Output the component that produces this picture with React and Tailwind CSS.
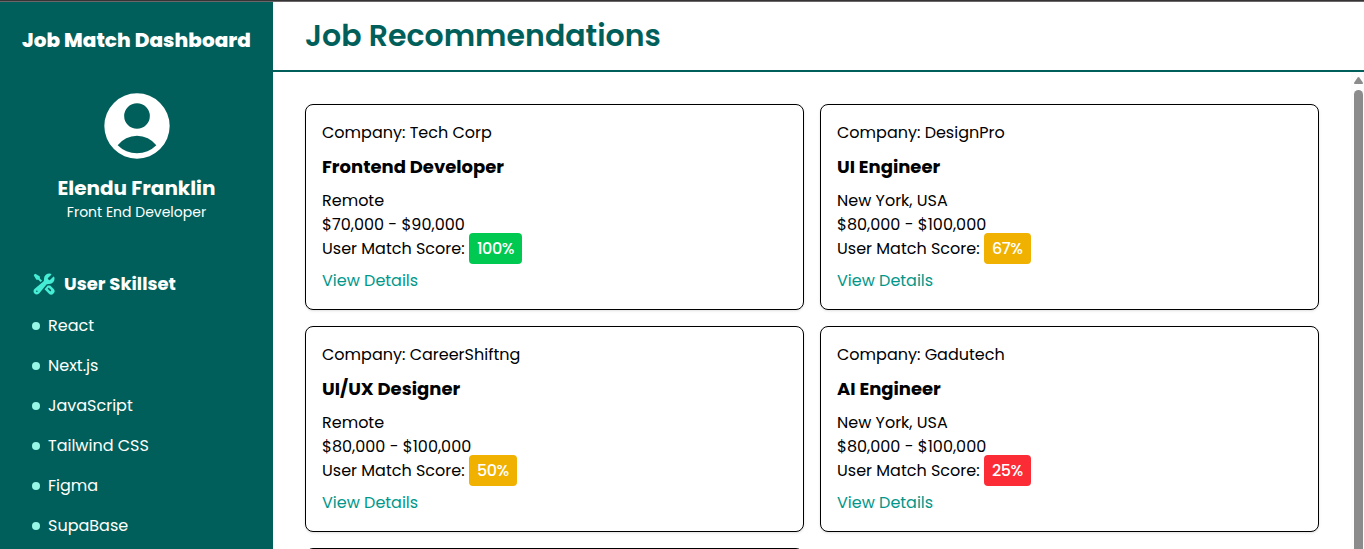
import React from 'react';
import { HiWrenchScrewdriver } from 'react-icons/hi2';

const skills = ['React', 'Next.js', 'JavaScript', 'Tailwind CSS', 'Figma', 'SupaBase'];

const jobs = [
  { company: 'Tech Corp', title: 'Frontend Developer', place: 'Remote', pay: '$70,000 - $90,000', score: '100%', tone: 'bg-green-500' },
  { company: 'DesignPro', title: 'UI Engineer', place: 'New York, USA', pay: '$80,000 - $100,000', score: '67%', tone: 'bg-yellow-500' },
  { company: 'CareerShiftng', title: 'UI/UX Designer', place: 'Remote', pay: '$80,000 - $100,000', score: '50%', tone: 'bg-yellow-500' },
  { company: 'Gadutech', title: 'AI Engineer', place: 'New York, USA', pay: '$80,000 - $100,000', score: '25%', tone: 'bg-red-500' },
];

function Avatar() {
  return (
    <svg viewBox="-1 -1 198 198" className="ml-px size-[66px]" aria-hidden="true">
      <path
        fill="currentColor"
        fillRule="evenodd"
        d="M98 0a98 98 0 1 0 0 196A98 98 0 0 0 98 0zM98 29.500a38.500 38.500 0 1 1 0 77a38.500 38.500 0 0 1 0-77zM40 156A72.500 72.500 0 0 1 156 156A82 82 0 0 1 40 156z"
      />
    </svg>
  );
}

function Sidebar() {
  return (
    <aside className="flex w-[273px] shrink-0 flex-col bg-teal-800 text-white">
      <h1 className="mt-6 text-center text-xl leading-7 font-extrabold tracking-[0.05px]">Job Match Dashboard</h1>
      <div className="mt-[39px] flex flex-col items-center">
        <Avatar />
        <h2 className="mt-[15px] text-xl leading-7 font-bold">Elendu Franklin</h2>
        <p className="text-sm leading-5">Front End Developer</p>
      </div>
      <div className="mt-12 px-8">
        <h3 className="flex items-center gap-2 text-lg leading-7 font-bold">
          <HiWrenchScrewdriver className="size-6 text-teal-300" />
          User Skillset
        </h3>
        <ul className="mt-4 flex flex-col gap-4">
          {skills.map((s) => (
            <li key={s} className="flex items-center gap-2 leading-6">
              <span className="size-2 rounded-full bg-teal-200" />
              {s}
            </li>
          ))}
        </ul>
      </div>
    </aside>
  );
}

function JobCard({ job }) {
  return (
    <article className="h-[206px] rounded-lg border border-black bg-white p-4 shadow-sm">
      <p>Company: {job.company}</p>
      <h3 className="my-2 text-lg leading-7 font-bold">{job.title}</h3>
      <p>{job.place}</p>
      <p>{job.pay}</p>
      <p>
        User Match Score:{' '}
        <span className={`rounded px-2 py-1 font-medium tracking-[-0.4px] text-white ${job.tone}`}>{job.score}</span>
      </p>
      <a className="mt-2 block text-teal-600">View Details</a>
    </article>
  );
}

export default function App() {
  return (
    <div className="flex h-[549px] flex-col overflow-hidden bg-white font-['Poppins',sans-serif] text-base text-black">
      <div className="h-0.5 shrink-0 border-b border-[#6a6669] bg-[#353535]" />
      <div className="flex min-h-0 flex-1">
        <Sidebar />
        <main className="flex min-w-0 flex-1 flex-col">
          <header className="h-[70px] shrink-0 border-b-2 border-teal-800 px-8 pt-4">
            <h2 className="text-3xl leading-9 font-semibold text-teal-800">Job Recommendations</h2>
          </header>
          <div className="flex min-h-0 flex-1">
            <div className="grid flex-1 auto-rows-max grid-cols-2 gap-4 overflow-hidden px-8 pt-8">
              {jobs.map((j) => (
                <JobCard key={j.title} job={j} />
              ))}
              <div className="h-[206px] rounded-lg border border-black bg-white" />
            </div>
            <div className="flex w-[13px] shrink-0 flex-col items-end bg-[#fcfcfc] pt-[5px] pr-px">
              <svg viewBox="0 0 9 7" className="h-[7px] w-[9px] text-[#8b8b8b]" aria-hidden="true">
                <path fill="currentColor" d="M3.700.6Q4.500-.4 5.300.6L8.800 5.500Q9.200 7 8 7H1Q-.2 7 .2 5.500z" />
              </svg>
              <div className="mt-1.5 w-[9px] flex-1 rounded-t-full bg-[#8b8b8b]" />
            </div>
          </div>
        </main>
      </div>
    </div>
  );
}
